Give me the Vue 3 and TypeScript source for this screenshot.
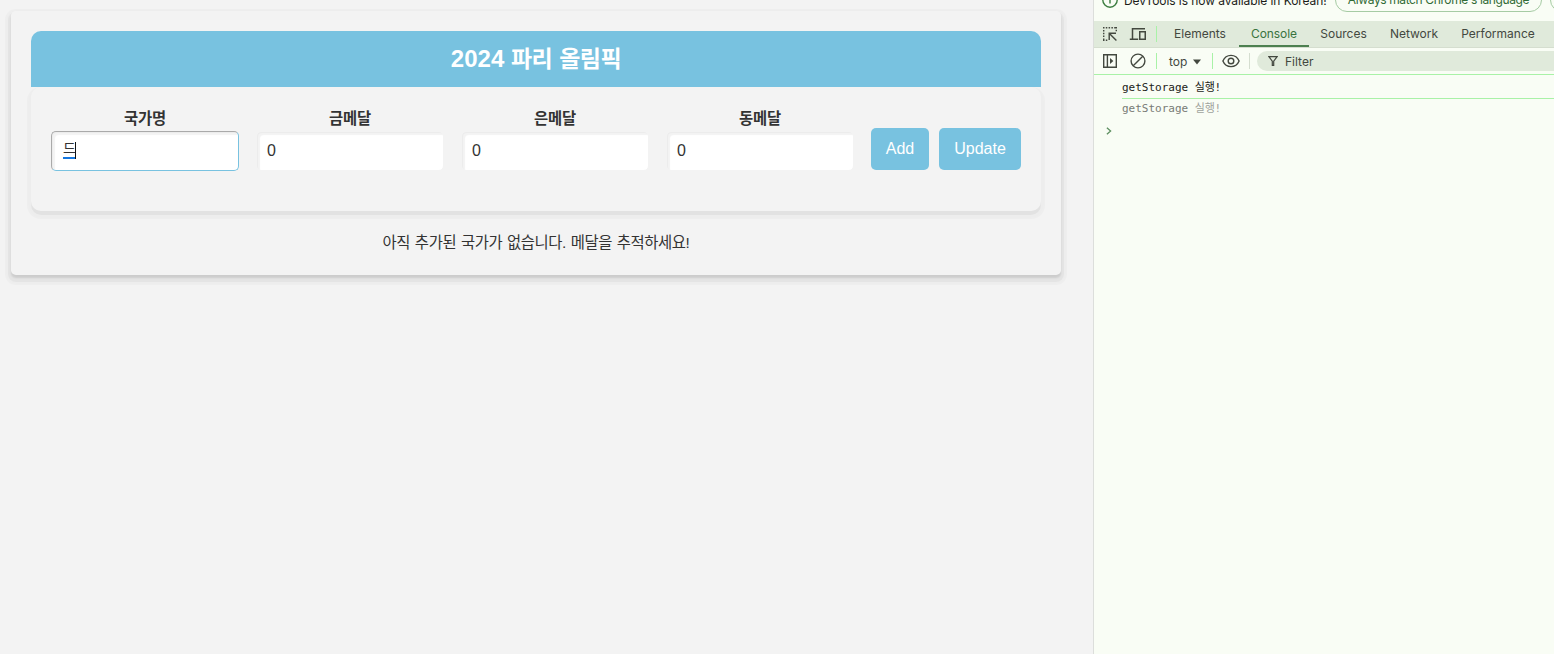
<script setup lang="ts">
import { ref } from 'vue'

interface Field { label: string; value: string; active?: boolean }

const fields = ref<Field[]>([
  { label: '국가명', value: '드', active: true },
  { label: '금메달', value: '0' },
  { label: '은메달', value: '0' },
  { label: '동메달', value: '0' },
])
const tabs = ['Elements', 'Console', 'Sources', 'Network', 'Performance']
const logs = ['실행!', '실행!']
</script>

<template>
  <div class="window">
    <main class="page">
      <section class="card">
        <h1 class="title">2024 <span class="ko">파리 올림픽</span></h1>
        <form class="form" @submit.prevent>
          <div v-for="f in fields" :key="f.label" class="field">
            <label class="ko">{{ f.label }}</label>
            <div class="input" :class="{ active: f.active }">
              <span :class="{ composing: f.active }">{{ f.value }}</span><i v-if="f.active" class="caret" />
            </div>
          </div>
          <div class="actions">
            <button type="button" class="add">Add</button>
            <button type="button" class="update">Update</button>
          </div>
        </form>
        <p class="empty ko">아직 추가된 국가가 없습니다. 메달을 추적하세요!</p>
      </section>
    </main>

    <aside class="devtools">
      <div class="infobar">
        <svg class="info" width="16" height="16" viewBox="0 0 16 16" fill="none" stroke="#3c7d40" stroke-width="1.4">
          <circle cx="8" cy="8" r="7.2" /><path d="M8 7v4.5M8 4v1.5" />
        </svg>
        <span class="notice">DevTools is now available in Korean!</span>
        <span class="pill"><span>Always match Chrome's language</span></span>
        <span class="pill next" />
      </div>
      <nav class="tabs">
        <svg class="ico inspect" width="16" height="16" viewBox="0 0 16 16" fill="none" stroke="#43483f" stroke-width="1.4">
          <path d="M1 1.7h14M1.7 4v11M1 14.3h5M14.3 1v5" stroke-dasharray="1.5 1.3" />
          <path d="M7.2 14V7.2H14M7.4 7.4l7 7" />
        </svg>
        <svg class="ico device" width="18" height="14" viewBox="0 0 18 14" fill="none" stroke="#43483f" stroke-width="1.5">
          <path d="M16 1.75H3.5V12M.8 12.2h8.4" /><rect x="10.75" y="4.75" width="5.5" height="7.5" />
        </svg>
        <i class="sep tabsep" />
        <span v-for="t in tabs" :key="t" class="tab" :class="[t.toLowerCase(), { on: t === 'Console' }]">{{ t }}</span>
      </nav>
      <div class="toolbar">
        <svg class="ico side" width="14" height="14" viewBox="0 0 14 14" fill="none" stroke="#43483f" stroke-width="1.4">
          <path d="M.7.7h12.6v12.6H.7zM4.4.7v12.6" /><path d="M7 4v6l3.4-3z" fill="#43483f" stroke="none" />
        </svg>
        <svg class="ico clear" width="16" height="16" viewBox="0 0 16 16" fill="none" stroke="#43483f" stroke-width="1.4">
          <circle cx="8" cy="8" r="6.9" /><path d="M12.8 3.2l-9.6 9.6" />
        </svg>
        <i class="sep s1" />
        <span class="top">top</span>
        <svg class="down" width="8" height="6" viewBox="0 0 8 6"><path d="M0 .4h8L4 5.6z" fill="#43483f" /></svg>
        <i class="sep s2" />
        <svg class="ico eye" width="18" height="14" viewBox="0 0 18 14" fill="none" stroke="#43483f" stroke-width="1.4">
          <path d="M.9 7C2.4 3.4 5.4 1.4 9 1.4S15.6 3.4 17.1 7C15.6 10.6 12.6 12.6 9 12.6S2.4 10.6.9 7z" /><circle cx="9" cy="7" r="2.8" />
        </svg>
        <i class="sep s3" />
        <div class="filter">
          <svg width="10" height="10" viewBox="0 0 10 10" fill="none" stroke="#43483f" stroke-width="1.2">
            <path d="M.9.7h8.2L5.7 5.2v4.1H4.3V5.2z" />
          </svg>
          <span>Filter</span>
        </div>
      </div>
      <div v-for="(l, i) in logs" :key="i" class="log" :class="{ faded: i === 1 }">getStorage <span>{{ l }}</span></div>
      <svg class="prompt" width="6" height="8" viewBox="0 0 6 8" fill="none" stroke="#5d8f60" stroke-width="1.3"><path d="M.9.7L4.6 4 .9 7.3" /></svg>
    </aside>
  </div>
</template>

<style>
html, body { overflow: hidden; }
</style>

<style scoped>
* { box-sizing: border-box; }
.window { display: flex; width: 1554px; height: 654px; background: #f3f3f3; overflow: hidden; font-family: "Liberation Sans", "Noto Sans CJK KR", sans-serif; color: #333; }
.page { width: 1093px; padding: 11px; flex: none; }
.card { width: 1050px; height: 264px; padding: 20px; border-radius: 5px; box-shadow: 0 3px 2px 0 rgba(0,0,0,.1), 0 4px 0 3px rgba(0,0,0,.035), 0 4px 1px 6px rgba(0,0,0,.022); }
.title { margin: 0; height: 56px; line-height: 55px; border-radius: 10px 10px 0 0; background: #78c2e0; color: #fff; font-size: 24px; text-align: center; }
.title .ko { font-size: 23px; letter-spacing: -.5px; word-spacing: 1px; }
.form { display: flex; height: 124px; padding: 20px; border-radius: 10px; box-shadow: 0 4px 0 0 rgba(0,0,0,.045), 0 4px 1px 4px rgba(0,0,0,.025); clip-path: inset(0 -10px -12px -10px); }
.field { width: 188px; margin-right: 17px; text-align: center; }
.field label { display: block; height: 24px; line-height: 23px; font-size: 15.4px; font-weight: 700; letter-spacing: -.2px; }
.input { display: flex; align-items: center; height: 40px; padding: 0 0 1px 10px; border: 1px solid #f3f3f3; border-radius: 5px; background: #fff; box-shadow: inset 1px 1px 0 #ececec, inset 3px 3px 1px #f3f3f3; font-size: 16px; }
.input.active { border-color: #aaa #78c2e0 #78c2e0 #aaa; padding-left: 11px; }
.composing { height: 17px; width: 12px; line-height: 13px; font-size: 14px; border-bottom: 2px solid #1577e0; }
.caret { width: 1px; height: 17px; background: #111; }
.actions { display: flex; gap: 10px; padding-top: 21px; }
button { height: 42px; padding: 0; border: 0; border-radius: 5px; background: #78c2e0; color: #fff; font: 16px "Liberation Sans", sans-serif; }
.add { width: 58px; }
.update { width: 82px; }
.empty { margin: 20px 0 0; text-align: center; font-size: 15.4px; line-height: 24px; letter-spacing: -.4px; word-spacing: .9px; }
.devtools { flex: 1; min-width: 0; border-left: 1px solid #dcdedb; background: #f9fdf5; font-family: Inter, sans-serif; font-size: 12px; color: #43483f; white-space: nowrap; overflow: hidden; }
.infobar { display: flex; height: 21px; overflow: hidden; color: #1b1c18; }
.info { margin: -8px 6px 0 8px; flex: none; }
.notice { width: 211px; margin-top: -7px; line-height: 16px; letter-spacing: -.08px; flex: none; }
.pill { width: 207px; height: 24px; margin-top: -12px; border: 1px solid #a6cba4; border-radius: 12px; color: #316b35; text-align: center; line-height: 22px; letter-spacing: -.38px; flex: none; }
.next { margin-left: 8px; }
.tabs { display: flex; align-items: center; height: 27px; border-bottom: 1px solid #d5decf; background: #e0eadb; }
.ico { flex: none; }
.inspect { margin-left: 8px; }
.device { margin-left: 11px; }
.sep { width: 1px; height: 16px; background: #a9f2a7; flex: none; }
.tabsep { margin: 0 6px 0 9px; }
.tab { height: 26px; line-height: 25px; text-align: center; flex: none; }
.elements { width: 74px; margin-right: 2px; }
.console { width: 70px; letter-spacing: -.05px; }
.sources { width: 69px; }
.network { width: 72px; }
.performance { width: 96px; }
.tab.on { color: #39733e; border-bottom: 2px solid #4d8050; }
.toolbar { display: flex; align-items: center; height: 27px; border-bottom: 1px solid #a9f2a7; }
.side { margin-left: 9px; }
.clear { margin-left: 13px; }
.s1 { margin: 0 12px 0 10px; }
.top { width: 24px; }
.down { margin-top: 2px; }
.s2 { margin: 0 9px 0 11px; }
.s3 { margin: 0 7px 0 9px; background: #d5ded0; }
.filter { display: flex; align-items: center; gap: 7px; flex: 1; height: 20px; padding-left: 11px; border-radius: 10px 0 0 10px; background: #e0eadb; }
.log { height: 24px; margin-left: 28px; border-bottom: 1px solid #a9f2a7; font: 11px/25px "DejaVu Sans Mono", "Noto Sans CJK KR", monospace; color: #1b1c18; }
.log span { letter-spacing: -.3px; }
.faded { height: 21px; line-height: 20px; border: 0; color: #787b75; }
.faded span { color: #a0a39d; }
.prompt { display: block; margin: 7px 0 0 12px; }
</style>
